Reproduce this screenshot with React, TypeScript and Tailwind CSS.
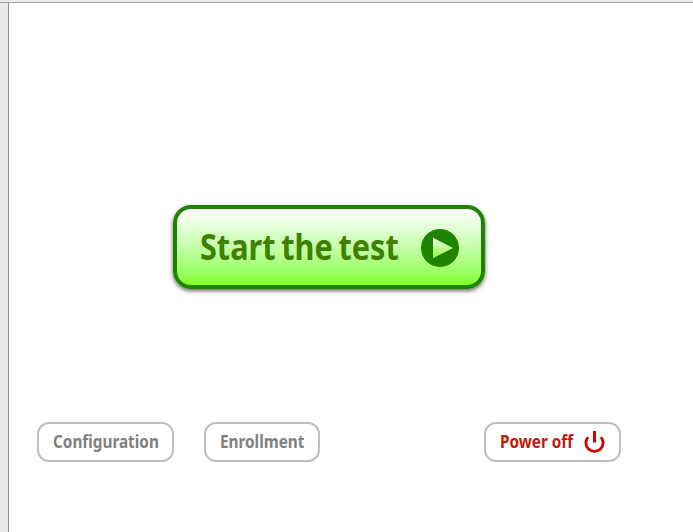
function PlayIcon() {
  return (
    <svg className="relative top-px" width="38" height="38" viewBox="0 0 38 38" aria-hidden="true">
      <defs>
        <linearGradient id="play" x1="0" y1="0" x2="0" y2="1">
          <stop offset="0" stopColor="#f4ffec" />
          <stop offset="1" stopColor="#90f73c" />
        </linearGradient>
      </defs>
      <circle cx="19" cy="19" r="19" fill="#1e8400" />
      <path d="M12 8.8v20.4l20-10.2Z" fill="url(#play)" />
    </svg>
  );
}

function PowerIcon() {
  return (
    <svg width="22" height="24" viewBox="0 0 22 24" fill="none" stroke="#d70000" aria-hidden="true">
      <path strokeWidth="2.8" d="M5.1 7.1A8.6 8.6 0 1 0 17.9 7.1" />
      <path strokeWidth="3" d="M11.5 1v11.5" />
    </svg>
  );
}

const secondary =
  "flex h-10 items-center rounded-[12px] border-2 border-[#bfbfbf] bg-white pl-3.5 text-[17px] font-bold leading-6";

export default function App() {
  return (
    <div className="flex h-[532px] w-[693px] flex-col overflow-hidden bg-[#ebebeb] font-['Noto_Sans',sans-serif]">
      <div className="h-[3px] shrink-0 border-b border-[#a3a3a3]" />
      <main className="ml-2 flex grow flex-col border-l border-[#8e8e8e] bg-white">
        <button className="ml-[164px] mt-[202px] flex h-[84px] w-[312px] items-center rounded-[18px] border-4 border-[#1e8400] bg-linear-to-b from-white to-[#80ff17] pl-[23px] shadow-[0_2px_4px_rgba(0,0,0,0.6)]">
          <span className="w-[221px] shrink-0 text-left">
            <span className="inline-block origin-left scale-x-[0.875] whitespace-nowrap text-[35px] font-bold leading-[44px] text-[#408000] [word-spacing:-2.5px]">
              Start the test
            </span>
          </span>
          <PlayIcon />
        </button>
        <div className="ml-7 mt-[133px] flex">
          <button className={`${secondary} w-[137px] text-[#808080]`}>
            <span className="origin-left scale-x-[0.9] whitespace-nowrap">Configuration</span>
          </button>
          <button className={`${secondary} ml-[30px] w-[116px] text-[#808080]`}>
            <span className="origin-left scale-x-[0.9] whitespace-nowrap">Enrollment</span>
          </button>
          <button className={`${secondary} ml-[164px] w-[137px] text-[#bf1a0a]`}>
            <span className="w-[83px] shrink-0 text-left">
              <span className="inline-block origin-left scale-x-[0.9] whitespace-nowrap">Power off</span>
            </span>
            <PowerIcon />
          </button>
        </div>
      </main>
    </div>
  );
}
